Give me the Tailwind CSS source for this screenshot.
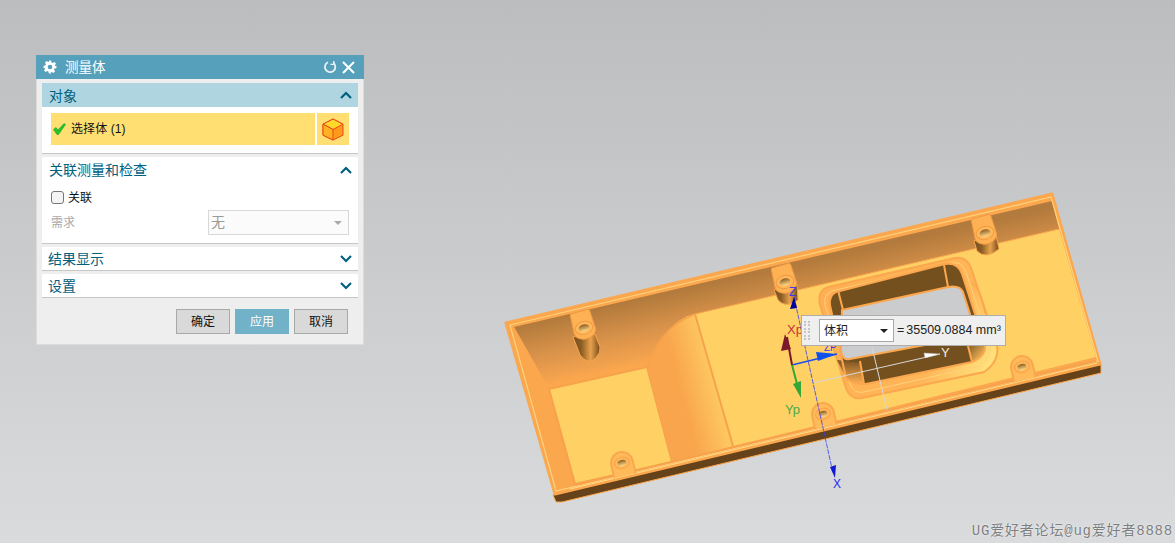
<!DOCTYPE html>
<html lang="zh">
<head>
<meta charset="UTF-8">
<title>测量体</title>
<script src="https://cdn.jsdelivr.net/npm/@tailwindcss/browser@4"></script>
</head>
<body class="overflow-hidden">
<div class="relative w-[1175px] h-[543px] overflow-hidden bg-gradient-to-b from-[#bcbdbf] to-[#dadbdd] font-['Liberation_Sans','Noto_Sans_CJK_SC',sans-serif]">

  <!-- part -->
  <svg class="absolute left-0 top-0" width="1175" height="543" viewBox="0 0 1175 543" fill="none">
    <defs>
      <linearGradient id="wall" gradientUnits="userSpaceOnUse" x1="532" y1="323" x2="546" y2="386">
        <stop offset="0" stop-color="#b27a3c"/>
        <stop offset="0.5" stop-color="#d8924a"/>
        <stop offset="1" stop-color="#fba74e"/>
      </linearGradient>
      <linearGradient id="step" gradientUnits="userSpaceOnUse" x1="683" y1="400" x2="726" y2="389">
        <stop offset="0" stop-color="#f9a54d"/>
        <stop offset="1" stop-color="#ffd164"/>
      </linearGradient>
      <linearGradient id="post" x1="0" y1="0" x2="1" y2="0">
        <stop offset="0" stop-color="#7a5220"/>
        <stop offset="0.3" stop-color="#8a5c24"/>
        <stop offset="0.65" stop-color="#e8a24c"/>
        <stop offset="0.85" stop-color="#a87030"/>
        <stop offset="1" stop-color="#6b4719"/>
      </linearGradient>
      <linearGradient id="ring" gradientUnits="userSpaceOnUse" x1="840" y1="290" x2="985" y2="370">
        <stop offset="0" stop-color="#ffb054"/>
        <stop offset="0.7" stop-color="#ffb658"/>
        <stop offset="1" stop-color="#ffe07a"/>
      </linearGradient>
      <linearGradient id="corner" gradientUnits="userSpaceOnUse" x1="850" y1="360" x2="850" y2="384">
        <stop offset="0" stop-color="#7a5220"/>
        <stop offset="1" stop-color="#ffb054"/>
      </linearGradient>
      <linearGradient id="corner2" gradientUnits="userSpaceOnUse" x1="967" y1="343" x2="985" y2="358">
        <stop offset="0" stop-color="#74501f"/>
        <stop offset="1" stop-color="#ffc060"/>
      </linearGradient>
      <linearGradient id="hole" x1="0" y1="0" x2="0" y2="1">
        <stop offset="0" stop-color="#8a5c24"/>
        <stop offset="1" stop-color="#ffd98a"/>
      </linearGradient>
      <g id="tab">
        <path d="M-11 13 L-11 0 A11 11 0 0 1 11 0 L11 13" fill="#ffba5a" stroke="#fba74e" stroke-width="2"/>
        <ellipse cx="0" cy="0" rx="7.500" ry="5.500" fill="#ffba5a" stroke="#fba74e" stroke-width="1.500"/>
        <ellipse cx="0" cy="0" rx="4.500" ry="3" fill="url(#hole)"/>
      </g>
      <g id="tabtop">
        <path d="M-10 -15 Q-10 -17 -8 -17 L8 -17 Q10 -17 10 -15 L11 3 A11 8 0 0 1 -11 3 Z" fill="#ffb254" stroke="#f09c48" stroke-width="1"/>
        <ellipse cx="0" cy="0" rx="9" ry="6.500" fill="#ffb85a" stroke="#ee9a46" stroke-width="1"/>
        <ellipse cx="0" cy="0" rx="5.500" ry="3.500" fill="url(#hole)"/>
      </g>
    </defs>

    <!-- underside, body -->
    <path d="M553 495 L1101 364 L1101 373 L562 502 L556 502 Z" fill="#66421a" stroke="#fba74e" stroke-width="1"/>
    <path d="M506 323 L1052 194 L1100 364 L555 494 Z" fill="#fba74e" stroke="#fba74e" stroke-width="3" stroke-linejoin="round"/>

    <!-- walls and floors -->
    <path d="M514 327 L1052 201 L1059 229 L695 314 C672 319 660 340 647 367 L549 389 Z" fill="url(#wall)"/>
    <path d="M514 327 L549 389 L575 484 L560 488 Z" fill="#fba74e"/>
    <path d="M549 389 L647 367 L672 462 L575 484 Z" fill="#ffd164" stroke="#f7a24c" stroke-width="2"/>
    <path d="M647 367 C660 340 672 319 695 314 L733 446 L672 462 Z" fill="url(#step)"/>
    <path d="M695 314 L1059 229 L1096 357 L733 446 Z" fill="#ffd164"/>
    <path d="M695 314 L733 446" stroke="#f7a24c" stroke-width="2"/>
    <path d="M695 314 L1059 229" stroke="#f7a24c" stroke-width="1"/>
    <path d="M647 367 C655 345 665 326 695 314" stroke="#f7a24c" stroke-width="1.500"/>

    <!-- rim -->
    <path d="M510 325 L1051 197 L1098 361 L556 491 Z" stroke="#ffd27c" stroke-width="1.200"/>
    <path d="M575 485 L1096 361" stroke="#f7a24c" stroke-width="2"/>
    <path d="M570 489 L1097 363" stroke="#ffdc8a" stroke-width="1"/>

    <!-- posts -->
    <path d="M573 337 L580 355 Q588 366 596 358 Q601 352 600 347 L595 334 Z" fill="url(#post)" stroke="#fba74e" stroke-width="1"/>
    <use href="#tabtop" transform="translate(584 328) rotate(-15)"/>
    <path d="M774 290 L778 300 Q786 309 798 300 L797 284 Z" fill="url(#post)" stroke="#fba74e" stroke-width="1"/>
    <use href="#tabtop" transform="translate(785 282) rotate(-15)"/>
    <path d="M974 241 L977 251 Q986 260 999 249 L996 235 Z" fill="url(#post)" stroke="#fba74e" stroke-width="1"/>
    <use href="#tabtop" transform="translate(985 233) rotate(-15)"/>
    <use href="#tab" transform="translate(622 463) rotate(-13)"/>
    <use href="#tab" transform="translate(823 414) rotate(-13)"/>
    <use href="#tab" transform="translate(1022 367) rotate(-13)"/>

    <!-- window -->
    <path d="M828 287 L955 258 Q967 256 971 268 L997 345 Q1000 361 984 372 L862 398 Q850 400 846 388 L820 305 Q817 291 828 287 Z" fill="url(#ring)" stroke="#fba74e" stroke-width="2"/>
    <path d="M972 283 Q980 287 985 313" stroke="#fba74e" stroke-width="1.500"/>
    <path d="M832 291 L952 263 Q962 261 966 272 L990 346 Q992 356 980 366 L864 392 Q854 394 850 384 L825 305 Q823 295 832 291 Z" stroke="#ffd27c" stroke-width="1"/>
    <path d="M836 292 L945 264 Q958 262 962 274 L985 345 Q986 356 972 362 L866 384 Q852 384 846 378 L830 305 Q829 295 836 292 Z" fill="#74501f"/>
    <path d="M837 360 L860 363 L864 384 Q852 384 846 378 Z" fill="url(#corner)"/>
    <path d="M967 342 L985 345 Q986 356 972 362 Z" fill="url(#corner2)"/>
    <path d="M842 310 L948 287 Q960 285 963 292 L977 336 L925 345 L850 359 Q842 361 841 350 Z" fill="#cbccce" stroke="#fba74e" stroke-width="2" stroke-linejoin="round"/>
    <path d="M838 290 L843 310 M944 265 L948 287 M860 361 L864 384 M967 342 L972 362" stroke="#fba74e" stroke-width="2"/>
    <path d="M836 292 L945 264 Q958 262 962 274 L985 345 Q986 356 972 362 L866 384 Q852 384 846 378 L830 305 Q829 295 836 292 Z" stroke="#fba74e" stroke-width="2"/>

    <!-- axes -->
    <path d="M813 383 L940 354" stroke="#d8d8d8" stroke-width="1"/>
    <path d="M925 358 L940 354 L924 353 Z" fill="#ffffff" stroke="#bdbdbd" stroke-width="0.500"/>
    <path d="M872 347 L887 410" stroke="#d8d8d8" stroke-width="1"/>
    <path d="M794 297 L833 473" stroke="#3040f0" stroke-width="0.800" stroke-dasharray="5 1"/>
    <path d="M794 297 L790 309 L797 308 Z" fill="#00009a"/>
    <path d="M835 478 L830 467 L836 465 Z" fill="#1018d8"/>
    <path d="M792 365 L837 354" stroke="#1a50e8" stroke-width="1.500"/>
    <path d="M837 354 L816 352 L818 361 Z" fill="#1050f0"/>
    <path d="M792 365 L787 337" stroke="#7d1a2a" stroke-width="2"/>
    <path d="M785 334 L781 351 L791 349 Z" fill="#7d1a2a"/>
    <path d="M792 365 L797 384" stroke="#36a635" stroke-width="2"/>
    <path d="M801 398 L793 384 L801 381 Z" fill="#36a635"/>
    <text x="789" y="296" font-size="12" fill="#3a3af0">Z</text>
    <text x="787" y="334" font-size="13" fill="#c8323c">Xp</text>
    <text x="785" y="414" font-size="13" fill="#4aa84a">Yp</text>
    <text x="941" y="357" font-size="13" fill="#e8e8e8">Y</text>
    <text x="833" y="488" font-size="12" fill="#2a2af0">X</text>
    <text x="824" y="351" font-size="10" fill="#3a3af0">ZP</text>
  </svg>

  <!-- measure readout -->
  <div class="absolute left-[801px] top-[315px] w-[205px] h-[31px] flex items-center bg-[#efefef] border border-[#aeaeae]">
    <div class="w-[7px] ml-[2px] grid grid-cols-2 gap-[1.5px]">
      <i class="block w-[2px] h-[2px] bg-[#c4c4c4]"></i><i class="block w-[2px] h-[2px] bg-[#c4c4c4]"></i>
      <i class="block w-[2px] h-[2px] bg-[#c4c4c4]"></i><i class="block w-[2px] h-[2px] bg-[#c4c4c4]"></i>
      <i class="block w-[2px] h-[2px] bg-[#c4c4c4]"></i><i class="block w-[2px] h-[2px] bg-[#c4c4c4]"></i>
      <i class="block w-[2px] h-[2px] bg-[#c4c4c4]"></i><i class="block w-[2px] h-[2px] bg-[#c4c4c4]"></i>
      <i class="block w-[2px] h-[2px] bg-[#c4c4c4]"></i><i class="block w-[2px] h-[2px] bg-[#c4c4c4]"></i>
      <i class="block w-[2px] h-[2px] bg-[#c4c4c4]"></i><i class="block w-[2px] h-[2px] bg-[#c4c4c4]"></i>
    </div>
    <div class="ml-[8px] w-[75px] h-[23px] flex items-center justify-between pl-[4px] pr-[5px] bg-white border border-[#a8a8a8] text-[12px] text-[#222]">
      <span>体积</span>
      <i class="block w-0 h-0 border-x-[4px] border-x-transparent border-t-[4px] border-t-[#222]"></i>
    </div>
    <span class="ml-[3px] text-[12.5px] text-[#222] whitespace-nowrap">=</span>
    <span class="ml-[2px] text-[12.5px] text-[#222] whitespace-nowrap">35509.0884 mm³</span>
  </div>

  <!-- dialog -->
  <div class="absolute left-[36px] top-[55px] w-[328px] h-[290px] bg-[#eeeeee] border-x border-b border-[#dcdcdc]">
    <div class="h-[24px] -mx-px flex items-center bg-[#56a0bb] text-white text-[13.5px] pl-[7px] pr-[8px]">
      <svg width="14" height="14" viewBox="0 0 24 24" fill="#fff"><path fill-rule="evenodd" d="M10 1h4l.6 3.200 2.100.9 2.700-1.800 2.800 2.800-1.800 2.700.9 2.100L23 10v4l-3.200.6-.9 2.100 1.800 2.700-2.800 2.800-2.700-1.800-2.100.9L14 23h-4l-.6-3.200-2.100-.9-2.700 1.800-2.800-2.800 1.800-2.700-.9-2.100L1 14v-4l3.200-.6.9-2.100-1.800-2.700 2.800-2.800 2.700 1.800 2.100-.9zM12 8a4 4 0 1 0 0 8 4 4 0 0 0 0-8z"/></svg>
      <span class="ml-[8px] pt-[2px]">测量体</span>
      <svg class="ml-auto" width="14" height="14" viewBox="0 0 14 14" fill="none" stroke="#e8f2f6" stroke-width="1.800"><path d="M5 2.200A5.200 5.200 0 1 0 10.500 3"/><path d="M10.800 1v3.400H7.400" stroke-width="1.400"/></svg>
      <svg class="ml-[5px] mr-[1px]" width="13" height="13" viewBox="0 0 13 13" fill="none" stroke="#fff" stroke-width="2"><path d="M1 1l11 11M12 1L1 12"/></svg>
    </div>

    <div class="mx-[5px] mt-[4px]">
      <!-- 对象 -->
      <div class="bg-white h-[71px] border-b border-[#c6c6c6]">
        <div class="h-[24px] flex items-center justify-between pl-[7px] pr-[6px] bg-[#afd6e0] text-[14px] text-[#00607f]">
          <span class="pt-[2px]">对象</span>
          <svg width="12" height="8" viewBox="0 0 12 8" fill="none" stroke="#00607f" stroke-width="2.200"><path d="M1 7l5-5 5 5"/></svg>
        </div>
        <div class="flex gap-[2px] mt-[6px] ml-[9px] mr-[9px] h-[32px]">
          <div class="flex-1 flex items-center bg-[#ffdf72] pl-[2px] text-[12px] text-[#111]">
            <svg width="13" height="12" viewBox="0 0 13 12"><path d="M0.500 6.500L3 4.500 5 7 11 0.500 12.500 1.500 5.500 11.500H4Z" fill="#27c02e" stroke="#1aa524" stroke-width="0.600" stroke-linejoin="round"/></svg>
            <span class="ml-[5px] tracking-[0.1px]">选择体 (1)</span>
          </div>
          <div class="w-[32px] flex items-center justify-center bg-[#ffdf72]">
            <svg width="22" height="23" viewBox="0 0 22 23"><path d="M11 1l10 5.200v11L11 22 1 17.200V6.200Z" fill="#ff9a1a" stroke="#e8481a" stroke-width="1"/><path d="M11 1l10 5.200-10 5.300L1 6.200Z" fill="#ffd92a" stroke="#e8481a" stroke-width="1"/><path d="M11 11.500V22L1 17.200V6.200Z" fill="#ffb21f" stroke="#e8481a" stroke-width="1"/></svg>
          </div>
        </div>
      </div>

      <!-- 关联测量和检查 -->
      <div class="bg-white mt-[3px] h-[87px] border-b border-[#c6c6c6]">
        <div class="h-[26px] flex items-center justify-between pl-[7px] pr-[6px] text-[14px] text-[#00607f]">
          <span>关联测量和检查</span>
          <svg width="12" height="8" viewBox="0 0 12 8" fill="none" stroke="#00607f" stroke-width="2.200"><path d="M1 7l5-5 5 5"/></svg>
        </div>
        <div class="flex items-center mt-[8px] ml-[9px] h-[13px] text-[12px] text-[#111]">
          <i class="block w-[13px] h-[13px] rounded-[3px] bg-[#f4f4f4] border border-[#777]"></i>
          <span class="ml-[4px]">关联</span>
        </div>
        <div class="flex items-center justify-between mt-[6px] ml-[9px] mr-[9px] text-[12px] text-[#aaaaaa]">
          <span>需求</span>
          <div class="w-[141px] h-[25px] flex items-center justify-between pl-[2px] pr-[6px] bg-[#fbfbfb] border border-[#d8d8d8] text-[14px] text-[#999]">
            <span>无</span>
            <i class="block w-0 h-0 border-x-[4px] border-x-transparent border-t-[4px] border-t-[#aaaaaa]"></i>
          </div>
        </div>
      </div>

      <!-- 结果显示 -->
      <div class="bg-white mt-[3px] h-[24px] flex items-center justify-between pl-[7px] pr-[6px] border-b border-[#c6c6c6] text-[14px] text-[#00607f]">
        <span class="pt-[2px] -ml-px">结果显示</span>
        <svg width="12" height="8" viewBox="0 0 12 8" fill="none" stroke="#00607f" stroke-width="2.200"><path d="M1 1l5 5 5-5"/></svg>
      </div>
      <!-- 设置 -->
      <div class="bg-white mt-[3px] h-[24px] flex items-center justify-between pl-[7px] pr-[6px] border-b border-[#c6c6c6] text-[14px] text-[#00607f]">
        <span class="pt-[2px] -ml-px">设置</span>
        <svg width="12" height="8" viewBox="0 0 12 8" fill="none" stroke="#00607f" stroke-width="2.200"><path d="M1 1l5 5 5-5"/></svg>
      </div>
    </div>

    <div class="flex justify-end gap-[5px] mt-[11px] pr-[15px] text-[12px] text-[#111]">
      <div class="w-[54px] h-[25px] flex items-center justify-center bg-[#d9d9d9] border border-[#a8a8a8]">确定</div>
      <div class="w-[54px] h-[25px] flex items-center justify-center bg-[#72b2c9] text-white">应用</div>
      <div class="w-[54px] h-[25px] flex items-center justify-center bg-[#d9d9d9] border border-[#a8a8a8]">取消</div>
    </div>
  </div>

  <!-- watermark -->
  <div class="absolute right-[2px] bottom-[1px] font-['Liberation_Mono','Noto_Sans_CJK_SC',monospace] text-[14px] tracking-[0.8px] text-[#7c7e80] [text-shadow:0_0_2px_#ffffff] whitespace-nowrap">UG爱好者论坛@ug爱好者8888</div>
</div>
</body>
</html>
